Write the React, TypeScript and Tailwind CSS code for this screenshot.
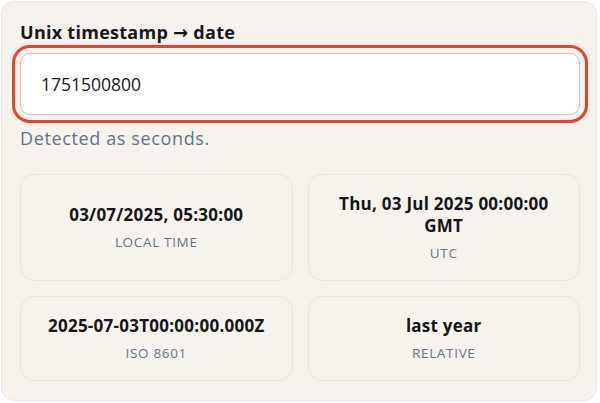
import { useState } from "react";

type Row = { value: string; label: string };

const rows: Row[] = [
  { value: "03/07/2025, 05:30:00", label: "Local time" },
  { value: "Thu, 03 Jul 2025 00:00:00 GMT", label: "UTC" },
  { value: "2025-07-03T00:00:00.000Z", label: "ISO 8601" },
  { value: "last year", label: "Relative" },
];

function ResultCard({ value, label }: Row) {
  return (
    <div className="flex flex-col items-center justify-center rounded-[14px] border border-[#e3e6ea] px-4 py-[18px] text-center">
      <div className="text-[17px] font-bold leading-[22px] tracking-[0.015em] text-[#14161a]">{value}</div>
      <div className="mt-[7px] text-[13.5px] font-medium uppercase leading-[18px] tracking-[0.05em] text-[#64748b]">{label}</div>
    </div>
  );
}

export default function App() {
  const [input, setInput] = useState("1751500800");

  return (
    <div className="w-[600px] bg-white pb-px pl-px pr-[3px] pt-px font-['Open_Sans',sans-serif]">
      <div className="rounded-[13px] border border-[#e3e6ea] bg-[#f6f3ed] pb-[19px] pl-[18px] pr-4 pt-[18px]">
        <label htmlFor="ts" className="block text-[18px] font-bold leading-6 tracking-[0.015em] text-[#16181c]">
          Unix timestamp <span className="font-['DejaVu_Sans',sans-serif]">→</span> date
        </label>
        <input
          id="ts"
          value={input}
          onChange={(e) => setInput(e.target.value)}
          className="mt-2 block h-[62px] w-full rounded-[10px] border border-[#c4c4c4] bg-white px-5 text-[17.5px] text-[#16181c] outline-[3px] outline-offset-[5px] outline-[#e5432c] outline-solid"
        />
        <p className="mt-[11px] text-[18px] leading-6 tracking-[0.035em] text-[#64748b]">Detected as seconds.</p>
        <div className="mt-[24px] grid grid-cols-2 gap-[15px]">
          {rows.map((row) => (
            <ResultCard key={row.label} {...row} />
          ))}
        </div>
      </div>
    </div>
  );
}
